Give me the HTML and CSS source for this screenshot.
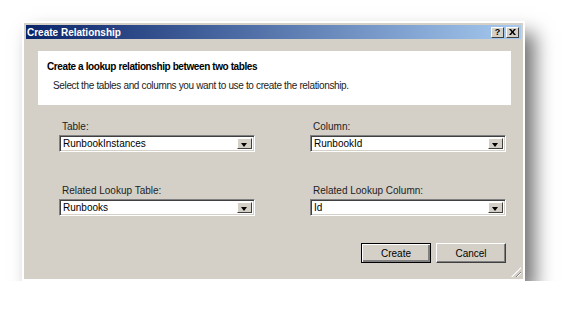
FILE: index.html
```html
<!DOCTYPE html>
<html lang="en">
<head>
  <meta charset="UTF-8" />
  <title>Create Relationship</title>
  <link rel="stylesheet" href="styles.css">
</head>
<body>
  <div class="dialog">
    <div class="titlebar">
      <span class="title">Create Relationship</span>
      <div class="caption-btns">
        <span class="cap-btn">?</span>
        <span class="cap-btn">
          <svg width="7" height="6" viewBox="0 0 7 6"><path d="M0 0h2l1.5 2 1.5-2h2L4.5 3 7 6H5L3.5 4 2 6H0l2.5-3z" fill="#000"/></svg>
        </span>
      </div>
    </div>

    <div class="header">
      <h2>Create a lookup relationship between two tables</h2>
      <p>Select the tables and columns you want to use to create the relationship.</p>
    </div>

    <div class="fields">
      <div class="field">
        <label>Table:</label>
        <div class="combo"><span class="value">RunbookInstances</span><span class="drop"></span></div>
      </div>
      <div class="field">
        <label>Column:</label>
        <div class="combo"><span class="value">RunbookId</span><span class="drop"></span></div>
      </div>
      <div class="field">
        <label>Related Lookup Table:</label>
        <div class="combo"><span class="value">Runbooks</span><span class="drop"></span></div>
      </div>
      <div class="field">
        <label>Related Lookup Column:</label>
        <div class="combo"><span class="value">Id</span><span class="drop"></span></div>
      </div>
    </div>

    <div class="actions">
      <button class="btn default">Create</button>
      <button class="btn">Cancel</button>
    </div>
    <div class="grip"></div>
  </div>
</body>
</html>
```

FILE: styles.css
```css
* {
  box-sizing: border-box;
}
body {
  margin: 0;
  background: #fff;
  font-family: 'Liberation Sans', Arial, sans-serif;
  font-size: 10px;
  color: #000;
}
.dialog {
  position: relative;
  margin: 21px 0 0 22px;
  width: 503px;
  height: 260px;
  border: 2px solid #fff;
  background: #d4d0c8;
  padding: 2px;
  box-shadow: 10px 12px 18px rgba(0, 0, 0, 0.55);
}
.titlebar {
  display: flex;
  align-items: center;
  justify-content: space-between;
  height: 14px;
  padding: 0 2px 0 1px;
  background: linear-gradient(to right, #0a246a, #a6caf0);
}
.title {
  color: #fff;
  font-weight: bold;
  font-size: 10px;
}
.caption-btns {
  display: flex;
  gap: 2px;
}
.cap-btn {
  display: flex;
  align-items: center;
  justify-content: center;
  width: 13px;
  height: 11px;
  background: #d4d0c8;
  border-top: 1px solid #fff;
  border-left: 1px solid #fff;
  border-right: 1px solid #404040;
  border-bottom: 1px solid #404040;
  font-weight: bold;
  font-size: 9px;
  line-height: 1;
}
.header {
  margin: 12px 10px 0 12px;
  height: 54px;
  background: #fff;
  padding: 10px 9px;
}
.header h2 {
  margin: 0;
  font-size: 10px;
  letter-spacing: -0.4px;
}
.header p {
  margin: 8px 0 0 6px;
  font-size: 10px;
  letter-spacing: -0.35px;
  color: #222;
}
.fields {
  display: grid;
  grid-template-columns: 196px 196px;
  column-gap: 55px;
  row-gap: 33px;
  margin: 16px 0 0 33px;
}
.field label {
  display: block;
  margin: 0 0 3px 3px;
  color: #222;
}
.combo {
  display: flex;
  height: 17px;
  background: #fff;
  border-top: 1px solid #808080;
  border-left: 1px solid #808080;
  border-right: 1px solid #fff;
  border-bottom: 1px solid #fff;
  box-shadow: inset 1px 1px 0 #404040, inset -1px -1px 0 #d4d0c8;
  padding: 2px;
}
.value {
  flex: 1;
  padding-left: 1px;
  line-height: 11px;
}
.drop {
  position: relative;
  width: 15px;
  background: #d4d0c8;
  border-top: 1px solid #fff;
  border-left: 1px solid #fff;
  border-right: 1px solid #404040;
  border-bottom: 1px solid #404040;
}
.drop::after {
  content: '';
  position: absolute;
  left: 3px;
  top: 4px;
  border-left: 3.5px solid transparent;
  border-right: 3.5px solid transparent;
  border-top: 4px solid #000;
}
.actions {
  display: flex;
  justify-content: flex-end;
  gap: 5px;
  margin: 27px 15px 0 0;
}
.btn {
  width: 70px;
  height: 20px;
  padding: 0;
  background: #d4d0c8;
  font-family: inherit;
  font-size: 10px;
  color: #000;
  border-top: 1px solid #fff;
  border-left: 1px solid #fff;
  border-right: 1px solid #404040;
  border-bottom: 1px solid #404040;
  box-shadow: inset -1px -1px 0 #808080;
}
.btn.default {
  border: 1px solid #000;
  box-shadow: inset 1px 1px 0 #fff, inset -2px -2px 0 #808080;
}
.grip {
  position: absolute;
  right: 2px;
  bottom: 2px;
  width: 10px;
  height: 10px;
  background: repeating-linear-gradient(135deg, transparent 0 2px, #808080 2px 3px, #fff 3px 4px);
  clip-path: polygon(100% 0, 100% 100%, 0 100%);
}
```
